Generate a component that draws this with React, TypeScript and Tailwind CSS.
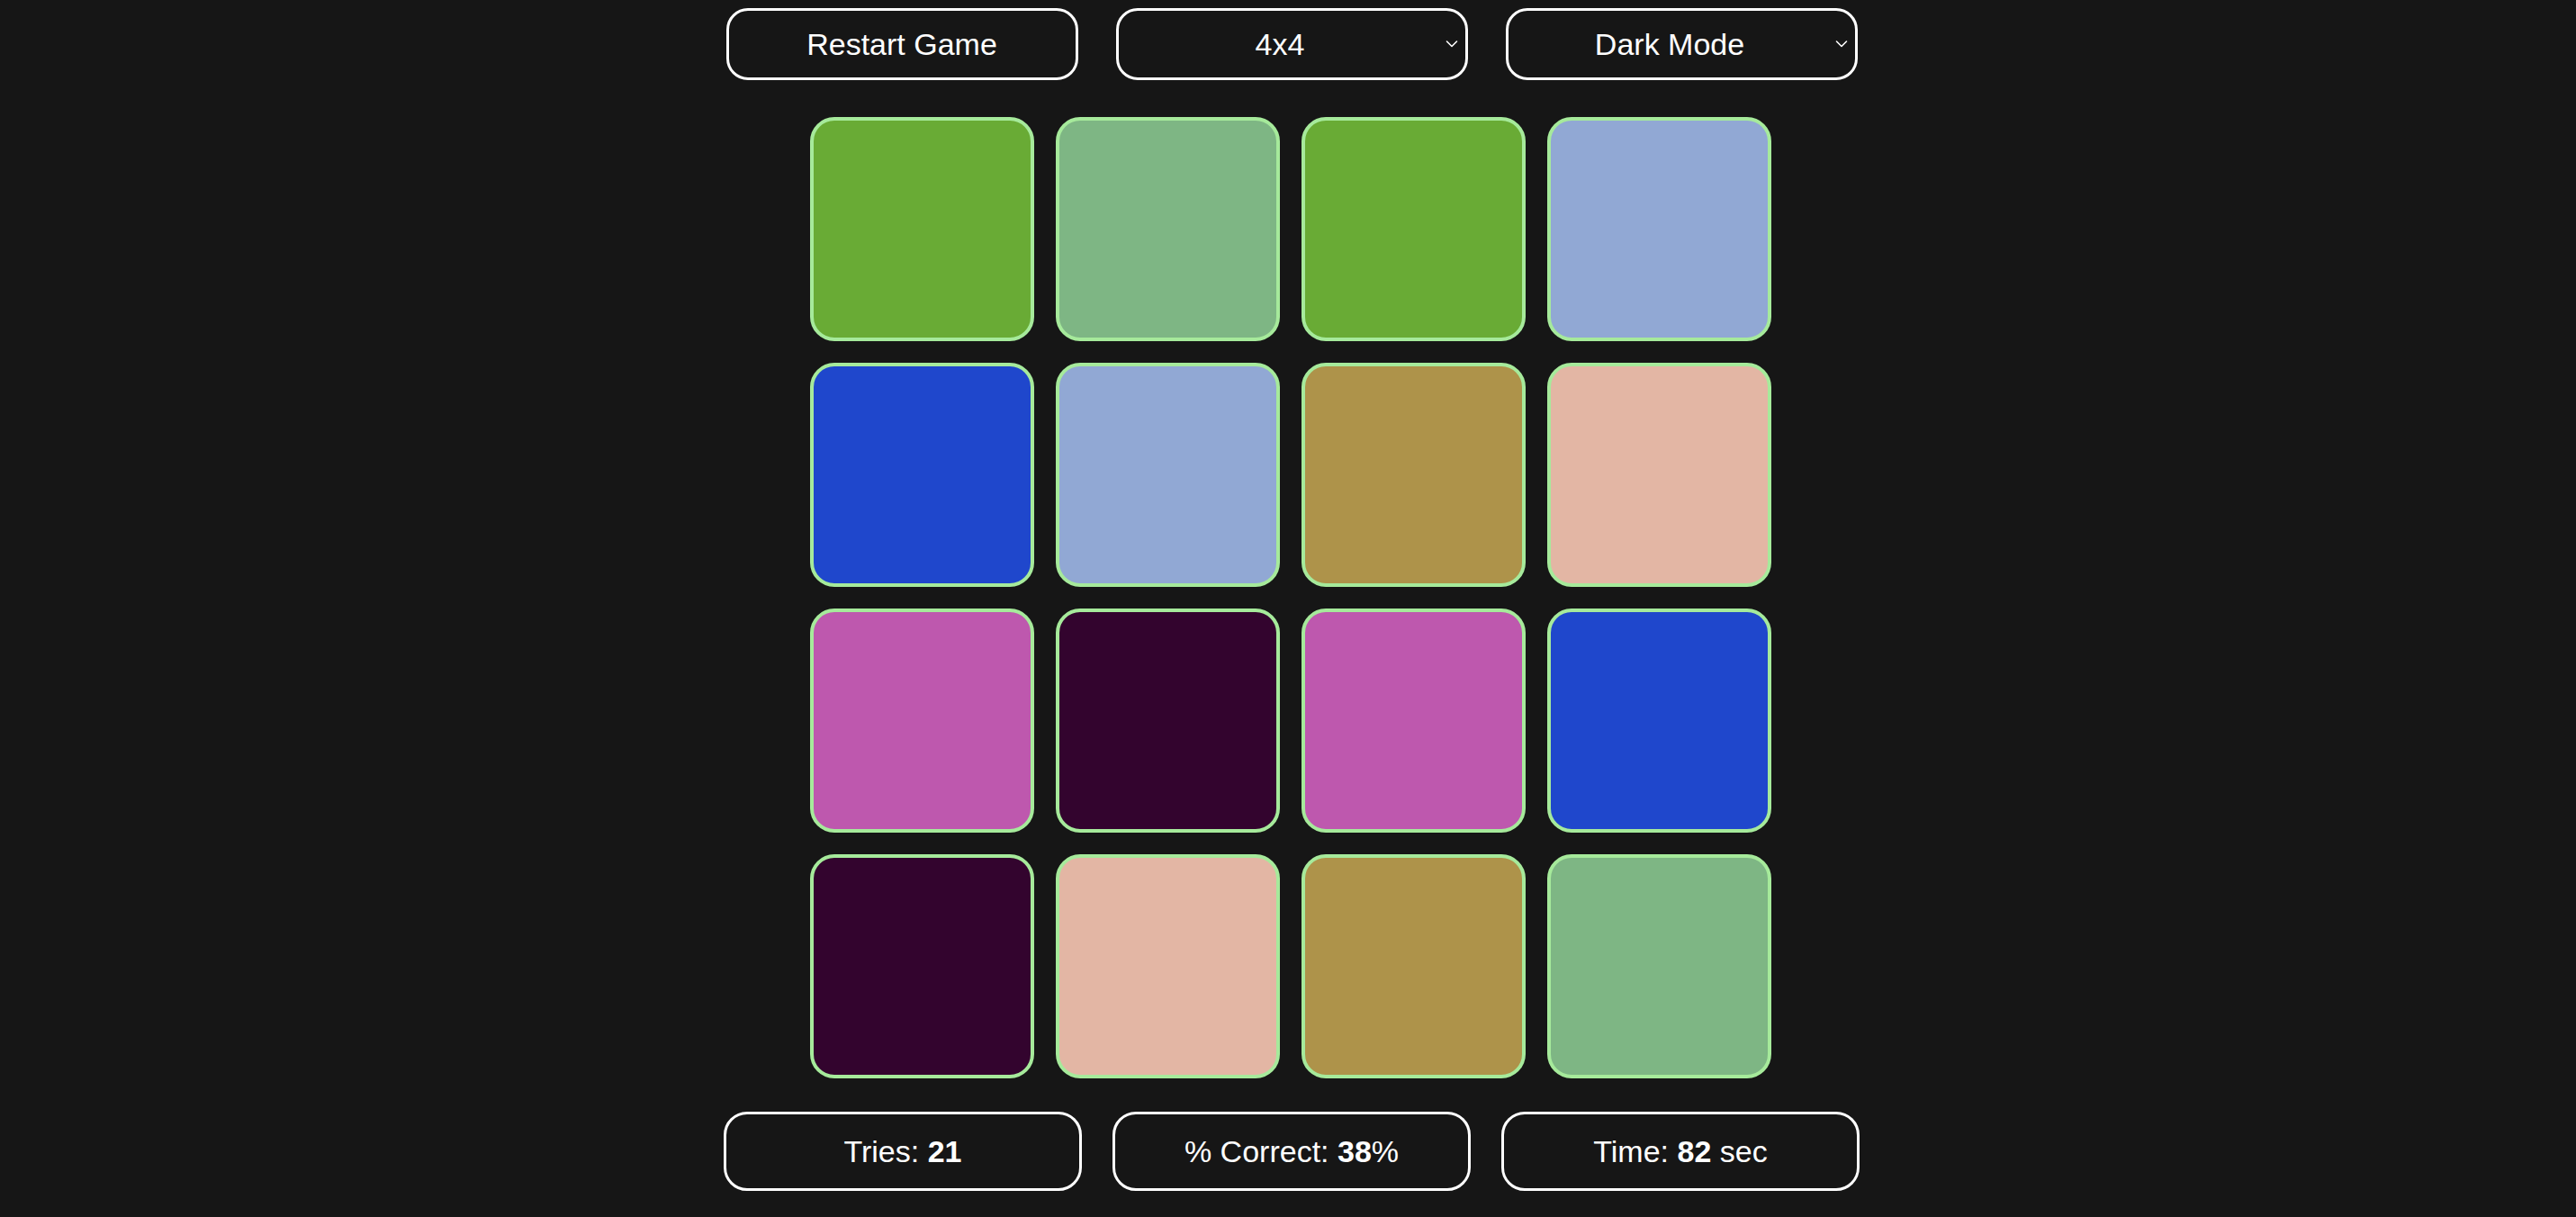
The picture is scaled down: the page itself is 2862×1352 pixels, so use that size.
import React from 'react';

const colors = [
    '#69ab35', '#7eb684', '#69ab35', '#91a8d4',
    '#1f47cc', '#91a8d4', '#ae934a', '#e3b6a4',
    '#be58ae', '#33042e', '#be58ae', '#1f47cc',
    '#33042e', '#e3b6a4', '#ae934a', '#7eb684',
];

const Chevron: React.FC = () => (
    <svg width="14" height="9" viewBox="0 0 14 9" className="absolute right-[8px] top-1/2 -translate-y-1/2">
        <path d="M1.5 1.5 L7 7 L12.5 1.5" fill="none" stroke="white" strokeWidth="1.6" strokeLinecap="round" strokeLinejoin="round" />
    </svg>
);

export default function App() {
    return (
        <div className="min-h-screen w-full bg-[#161616] text-white font-['Liberation_Sans',Arial,sans-serif] flex flex-col items-center pt-[9px]">
            {/* Controls */}
            <div className="flex gap-[42px] ml-[8px]">
                <button className="w-[391px] h-[80px] rounded-[24px] border-[3px] border-white bg-[#161616] text-[34px] text-white flex items-center justify-center">
                    Restart Game
                </button>
                <div className="relative w-[391px] h-[80px] rounded-[24px] border-[3px] border-white flex items-center justify-center pr-[26px] text-[34px]">
                    4x4
                    <Chevron />
                </div>
                <div className="relative w-[391px] h-[80px] rounded-[24px] border-[3px] border-white flex items-center justify-center pr-[26px] text-[34px]">
                    Dark Mode
                    <Chevron />
                </div>
            </div>

            {/* Board */}
            <div className="grid grid-cols-4 gap-[24px] mt-[41px] ml-[6px]">
                {colors.map((c, i) => (
                    <div
                        key={i}
                        className="w-[249px] h-[249px] rounded-[27px] border-[4px] border-[#a6ea9b]"
                        style={{ backgroundColor: c }}
                    />
                ))}
            </div>

            {/* Stats */}
            <div className="flex gap-[34px] mt-[37px] ml-[8px]">
                <div className="w-[398px] h-[88px] rounded-[26px] border-[3px] border-white flex items-center justify-center text-[34px]">
                    Tries:&nbsp;<b>21</b>
                </div>
                <div className="w-[398px] h-[88px] rounded-[26px] border-[3px] border-white flex items-center justify-center text-[34px]">
                    % Correct:&nbsp;<b>38</b>%
                </div>
                <div className="w-[398px] h-[88px] rounded-[26px] border-[3px] border-white flex items-center justify-center text-[34px]">
                    Time:&nbsp;<b>82</b>&nbsp;sec
                </div>
            </div>
        </div>
    );
}
